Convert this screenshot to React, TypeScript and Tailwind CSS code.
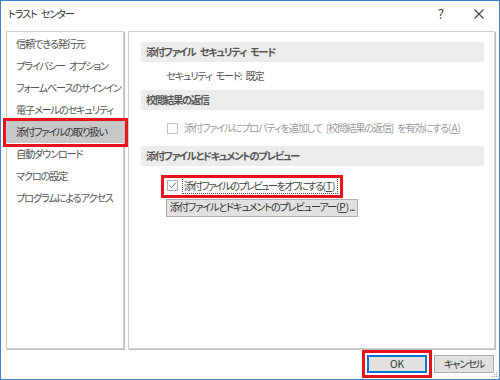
import React from "react";

const font = "[font-family:'Noto_Sans_CJK_JP','Noto_Sans',sans-serif] [font-feature-settings:'palt']";
const t = "text-[10.2px] tracking-[-1.2px] [word-spacing:3px] whitespace-nowrap";

const leftItems = [
  "信頼できる発行元",
  "プライバシー オプション",
  "フォームベースのサインイン",
  "電子メールのセキュリティ",
  "添付ファイルの取り扱い",
  "自動ダウンロード",
  "マクロの設定",
  "プログラムによるアクセス",
];

function Header({ children }: { children: React.ReactNode }) {
  return (
    <div className={`h-[20px] bg-[#ececec] flex items-center pl-[5px] font-bold text-[#555] ${t}`}>
      {children}
    </div>
  );
}

function Key({ k }: { k: string }) {
  return (
    <span className="tracking-[0px]">
      (<span className="underline">{k}</span>)
    </span>
  );
}

export default function App() {
  return (
    <div className={`w-[500px] h-[380px] bg-white border border-[#3b83cf] flex flex-col text-[#444] ${font}`}>
      {/* title bar */}
      <div className="h-[30px] flex items-center justify-between pl-[7px] pr-[15px] shrink-0">
        <span className={`text-[#333] -mt-[5px] ${t}`}>トラスト センター</span>
        <div className="flex items-center gap-[30px] -mt-[5px]">
          <span className="text-[13px] text-[#444]">?</span>
          <svg width="10" height="10" viewBox="0 0 10 10">
            <path d="M0.5 0.5 L9.5 9.5 M9.5 0.5 L0.5 9.5" stroke="#444" strokeWidth="1.1" />
          </svg>
        </div>
      </div>
      {/* body */}
      <div className="flex gap-[4px] pl-[5px] pr-[4px] h-[318px] shrink-0">
        <div className="w-[118px] border border-[#cfcfcf] shadow-[1px_1px_0_#bdbdbd] pt-[1px]">
          {leftItems.map((s, i) => (
            <div
              key={s}
              className={`relative h-[22px] flex items-center pl-[9px] ${t} ${i === 4 ? "bg-[#c8c8c8] text-[#333]" : "text-[#555]"}`}
            >
              {s}
              {i === 4 && (
                <div className="absolute left-[-4px] right-[-5px] top-[-3px] bottom-[-4px] border-[3px] border-[#e8141c]" />
              )}
            </div>
          ))}
        </div>
        <div className="flex-1 border border-[#cfcfcf] shadow-[1px_1px_0_#bdbdbd] pt-[10px] pl-[12px] pr-[10px]">
          <Header>添付ファイル セキュリティ モード</Header>
          <div className={`h-[28px] flex items-center pl-[25px] text-[#555] ${t}`}>セキュリティ モード: 既定</div>
          <Header>校閲結果の返信</Header>
          <div className={`h-[36px] flex items-center pl-[26px] text-[#9a9a9a] ${t}`}>
            <span className="w-[11px] h-[11px] border border-[#c4c4c4] bg-white mr-[6px] shrink-0" />
            <span>
              添付ファイルにプロパティを追加して [校閲結果の返信] を有効にする<Key k="A" />
            </span>
          </div>
          <Header>添付ファイルとドキュメントのプレビュー</Header>
          <div className="mt-[5px] pl-[26px]">
            <div className="relative inline-flex items-center h-[22px] pr-[4px]">
              <span className="w-[11px] h-[11px] border border-[#b0b0b0] bg-white mr-[4px] shrink-0 flex items-center justify-center">
                <svg width="9" height="9" viewBox="0 0 9 9">
                  <path d="M1.5 4.5 L3.6 6.6 L7.6 2" stroke="#6a6a6a" strokeWidth="1" fill="none" />
                </svg>
              </span>
              <span className={`text-[#444] border border-dotted border-[#555] pl-[1px] pr-[1px] leading-[15px] ${t} tracking-[-1.6px]`}>
                添付ファイルのプレビューをオフにする<Key k="T" />
              </span>
              <div className="absolute left-[-6px] right-[-1px] top-0 bottom-[-1px] border-[3px] border-[#e8141c]" />
            </div>
          </div>
          <div className="mt-[2px] pl-[25px]">
            <button className={`h-[18px] w-[192px] border border-[#adadad] bg-[#e1e1e1] text-[#333] flex items-center justify-center leading-none ${t}`}>
              添付ファイルとドキュメントのプレビューアー<Key k="P" />...
            </button>
          </div>
        </div>
      </div>
      {/* footer */}
      <div className="flex-1 relative flex items-center justify-end gap-[7px] pr-[5px]">
        <div className="relative">
          <button className={`w-[60px] h-[18px] border border-[#0078d7] shadow-[inset_0_0_0_1px_#0078d7] bg-[#e1e1e1] text-[#333] flex items-center justify-center leading-none ${t} tracking-normal`}>
            OK
          </button>
          <div className="absolute left-[-5px] right-[-5px] top-[-5px] bottom-[-5px] border-[3px] border-[#e8141c]" />
        </div>
        <button className={`w-[60px] h-[18px] border border-[#adadad] bg-[#e1e1e1] text-[#333] flex items-center justify-center leading-none ${t}`}>
          キャンセル
        </button>
        <svg className="absolute right-[1px] bottom-[1px]" width="6" height="6" viewBox="0 0 6 6">
          <rect x="4" y="0" width="1" height="1" fill="#999" />
          <rect x="2" y="2" width="1" height="1" fill="#999" />
          <rect x="4" y="2" width="1" height="1" fill="#999" />
          <rect x="0" y="4" width="1" height="1" fill="#999" />
          <rect x="2" y="4" width="1" height="1" fill="#999" />
          <rect x="4" y="4" width="1" height="1" fill="#999" />
        </svg>
      </div>
    </div>
  );
}
